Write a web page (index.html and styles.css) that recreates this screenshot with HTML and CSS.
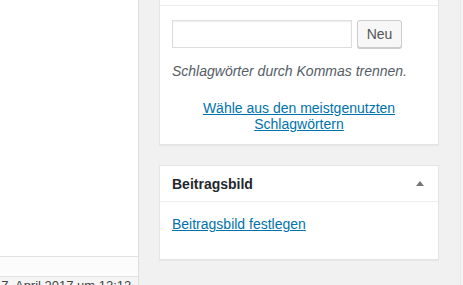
FILE: index.html
```html
<!DOCTYPE html>
<html lang="de">
<head>
  <meta charset="UTF-8" />
  <title>Beitrag bearbeiten</title>
  <link rel="stylesheet" href="styles.css">
</head>
<body>
  <div class="layout">
    <div class="main-col">
      <div class="editor-area"></div>
      <div class="status-row"></div>
      <div class="date-row">17. April 2017 um 12:12</div>
    </div>

    <div class="side-col">
      <div class="postbox tags-box">
        <div class="inside">
          <div class="tag-add">
            <input type="text" class="tag-input">
            <button class="button">Neu</button>
          </div>
          <p class="howto">Schlagwörter durch Kommas trennen.</p>
          <p class="tagcloud"><a href="#">Wähle aus den meistgenutzten Schlagwörtern</a></p>
        </div>
      </div>

      <div class="postbox">
        <div class="hndle">
          <h2>Beitragsbild</h2>
          <span class="toggle"></span>
        </div>
        <div class="inside">
          <a href="#">Beitragsbild festlegen</a>
        </div>
      </div>
    </div>

    <div class="edge-col"></div>
  </div>
</body>
</html>
```

FILE: styles.css
```css
:root {
  --bg: #f1f1f1;
  --border: #e5e5e5;
  --link: #0073aa;
  --text: #23282d;
  --muted: #555d66;
}

* {
  box-sizing: border-box;
}

body {
  margin: 0;
  background: var(--bg);
  font-family: "Liberation Sans", Arial, sans-serif;
  font-size: 14px;
  color: var(--text);
  overflow: hidden;
}

.layout {
  display: flex;
  height: 285px;
}

/* left: end of the editor */
.main-col {
  width: 139px;
  display: flex;
  flex-direction: column;
  background: #fff;
  border-right: 1px solid #dedede;
  overflow: hidden;
}

.editor-area {
  flex-shrink: 0;
  height: 256px;
  background: #fff;
}

.status-row {
  flex-shrink: 0;
  height: 21px;
  background: #fcfcfc;
  border-top: 1px solid #e3e3e3;
  border-bottom: 1px solid #e3e3e3;
}

.date-row {
  flex-shrink: 0;
  background: #f5f5f5;
  padding-top: 1px;
  margin-left: -6px;
  white-space: nowrap;
  color: #444;
  font-size: 13px;
  line-height: 15px;
}

/* right: sidebar boxes */
.side-col {
  width: 280px;
  margin-left: 20px;
  margin-top: -20px;
}

.postbox {
  background: #fff;
  border: 1px solid var(--border);
  box-shadow: 0 1px 1px rgba(0, 0, 0, 0.04);
  margin-bottom: 20px;
}

.tags-box {
  border-top: none;
  padding-top: 25px;
  height: 165px;
}

.tags-box .inside {
  border-top: 1px solid #eee;
  padding: 13px 12px 0;
}

.tag-add {
  display: flex;
  gap: 5px;
}

.tag-input {
  width: 180px;
  height: 28px;
  margin: 0;
  border: 1px solid #ddd;
  box-shadow: inset 0 1px 2px rgba(0, 0, 0, 0.07);
  font-size: 14px;
}

.button {
  height: 28px;
  width: 45px;
  padding: 0;
  background: #f7f7f7;
  border: 1px solid #ccc;
  border-radius: 3px;
  box-shadow: 0 1px 0 #ccc;
  color: #555;
  font-family: inherit;
  font-size: 14px;
}

.howto {
  margin: 14px 0 0;
  font-style: italic;
  color: var(--muted);
  line-height: 19px;
}

.tagcloud {
  margin: 19px 0 0;
  text-align: center;
  line-height: 16px;
}

a {
  color: var(--link);
}

.hndle {
  display: flex;
  align-items: center;
  justify-content: space-between;
  height: 36px;
  padding: 0 12px;
  border-bottom: 1px solid #eee;
}

.hndle h2 {
  margin: 0;
  font-size: 14px;
  font-weight: 600;
}

.toggle {
  width: 0;
  height: 0;
  margin-right: 2px;
  border-left: 4px solid transparent;
  border-right: 4px solid transparent;
  border-bottom: 5px solid #72777c;
}

.postbox .inside {
  padding: 14px 12px 0;
  height: 57px;
}

.tags-box .inside {
  height: auto;
}

.edge-col {
  flex: 1;
  margin-left: 21px;
  border-left: 1px solid #e8e8e8;
  background: #f5f5f5;
}
```
